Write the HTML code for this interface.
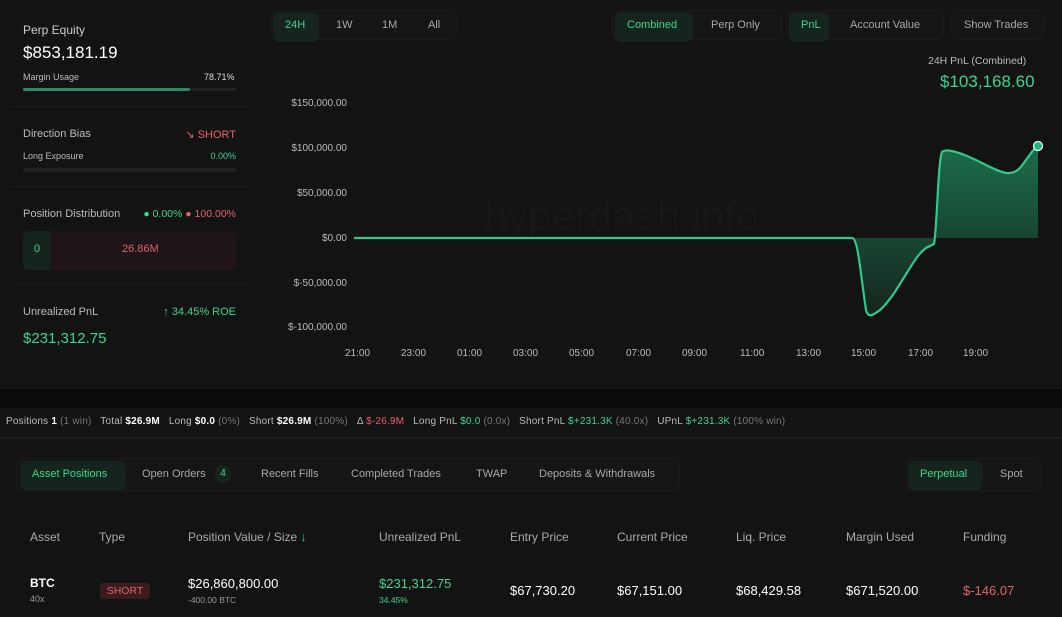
<!DOCTYPE html>
<html><head><meta charset="utf-8"><style>
*{box-sizing:border-box;margin:0;padding:0}
body{width:1062px;height:617px;background:#0c0c0c;font-family:"Liberation Sans",sans-serif;color:#e8e8e8;position:relative;overflow:hidden;font-size:11px}
.a{position:absolute;white-space:nowrap}
.g{color:#3dd68c}.r{color:#e5616b}.m{color:#a8a8a8}.d{color:#777}
.panel{background:#131313}
.seg{position:absolute;background:#151515;border:1px solid #1c1c1c;border-radius:8px;height:30px}
.on{position:absolute;background:#16241e;border-radius:7px;color:#3dd68c}
.ax{font-size:10px;color:#bbb}
</style></head><body>
<div class="a panel" style="left:0;top:0;width:1062px;height:389px"></div>
<div class="a panel" style="left:0;top:408px;width:1062px;height:209px"></div>
<div class="a" style="left:0;top:437px;width:1062px;height:1px;background:#222"></div>

<!-- left panel -->
<div class="a" style="left:23px;top:23px;font-size:12px;color:#ccc">Perp Equity</div>
<div class="a" style="left:23px;top:43px;font-size:17px;color:#fff">$853,181.19</div>
<div class="a" style="left:23px;top:72px;font-size:9px;color:#bbb">Margin Usage</div>
<div class="a" style="left:204px;top:72px;font-size:9px;color:#ddd">78.71%</div>
<div class="a" style="left:23px;top:88px;width:213px;height:3px;background:#222;border-radius:2px"><div style="width:167px;height:3px;background:#2f8a63;border-radius:2px"></div></div>
<div class="a" style="left:10px;top:106px;width:238px;height:1px;background:#1e1e1e"></div>
<div class="a" style="left:23px;top:128px;font-size:11px;color:#bbb">Direction Bias</div>
<div class="a r" style="right:826px;top:128px;font-size:11px">↘ SHORT</div>
<div class="a" style="left:23px;top:151px;font-size:9px;color:#bbb">Long Exposure</div>
<div class="a g" style="right:826px;top:151px;font-size:9px">0.00%</div>
<div class="a" style="left:23px;top:168px;width:213px;height:4px;background:#222;border-radius:2px"></div>
<div class="a" style="left:10px;top:186px;width:238px;height:1px;background:#1e1e1e"></div>
<div class="a" style="left:23px;top:208px;font-size:11px;color:#bbb">Position Distribution</div>
<div class="a" style="right:826px;top:208px;font-size:10.5px"><span class="g">● 0.00%</span> <span class="r">● 100.00%</span></div>
<div class="a" style="left:23px;top:231px;width:213px;height:39px;background:#201516;border-radius:6px;overflow:hidden"><div style="width:27px;height:39px;background:#15241d"></div></div>
<div class="a g" style="left:34px;top:243px;font-size:11px">0</div>
<div class="a" style="left:122px;top:243px;font-size:11px;color:#d9636c">26.86M</div>
<div class="a" style="left:14px;top:284px;width:234px;height:1px;background:#1e1e1e"></div>
<div class="a" style="left:23px;top:306px;font-size:11px;color:#bbb">Unrealized PnL</div>
<div class="a g" style="right:826px;top:306px;font-size:11px">↑ 34.45% ROE</div>
<div class="a g" style="left:23px;top:330px;font-size:15px">$231,312.75</div>

<!-- chart controls -->
<div class="seg" style="left:270px;top:10px;width:188px"></div>
<div class="on" style="left:273px;top:12px;width:46px;height:30px"></div>
<div class="a g" style="left:285px;top:19px;font-size:11px">24H</div>
<div class="a m" style="left:336px;top:19px;font-size:11px">1W</div>
<div class="a m" style="left:382px;top:19px;font-size:11px">1M</div>
<div class="a m" style="left:428px;top:19px;font-size:11px">All</div>
<div class="seg" style="left:612px;top:10px;width:170px"></div>
<div class="on" style="left:615px;top:12px;width:78px;height:30px"></div>
<div class="a g" style="left:627px;top:19px;font-size:11px">Combined</div>
<div class="a m" style="left:711px;top:19px;font-size:11px">Perp Only</div>
<div class="seg" style="left:786px;top:10px;width:158px"></div>
<div class="on" style="left:789px;top:12px;width:40px;height:30px"></div>
<div class="a g" style="left:801px;top:19px;font-size:11px">PnL</div>
<div class="a m" style="left:850px;top:19px;font-size:11px">Account Value</div>
<div class="seg" style="left:950px;top:10px;width:95px"></div>
<div class="a m" style="left:964px;top:19px;font-size:11px">Show Trades</div>
<div class="a" style="left:928px;top:55px;font-size:10.5px;color:#bbb">24H PnL (Combined)</div>
<div class="a g" style="left:940px;top:72px;font-size:17px">$103,168.60</div>

<!-- axes -->
<div class="a ax" style="right:715px;top:98px">$150,000.00</div>
<div class="a ax" style="right:715px;top:143px">$100,000.00</div>
<div class="a ax" style="right:715px;top:188px">$50,000.00</div>
<div class="a ax" style="right:715px;top:233px">$0.00</div>
<div class="a ax" style="right:715px;top:278px">$-50,000.00</div>
<div class="a ax" style="right:715px;top:322px">$-100,000.00</div>
<div class="a ax" style="left:345px;top:348px">21:00</div>
<div class="a ax" style="left:401px;top:348px">23:00</div>
<div class="a ax" style="left:457px;top:348px">01:00</div>
<div class="a ax" style="left:513px;top:348px">03:00</div>
<div class="a ax" style="left:569px;top:348px">05:00</div>
<div class="a ax" style="left:626px;top:348px">07:00</div>
<div class="a ax" style="left:682px;top:348px">09:00</div>
<div class="a ax" style="left:740px;top:348px">11:00</div>
<div class="a ax" style="left:796px;top:348px">13:00</div>
<div class="a ax" style="left:851px;top:348px">15:00</div>
<div class="a ax" style="left:908px;top:348px">17:00</div>
<div class="a ax" style="left:963px;top:348px">19:00</div>
<div class="a" style="left:484px;top:192px;font-size:42px;color:#171717">hyperdash.info</div>
<svg class="a" style="left:0;top:0" width="1062" height="400">
<defs><linearGradient id="f" x1="0" y1="0" x2="0" y2="1"><stop offset="0" stop-color="#1f8a5e" stop-opacity=".75"/><stop offset="1" stop-color="#1f8a5e" stop-opacity=".15"/></linearGradient></defs>
<path d="M852 238 C858 238 860 270 866 310 C868 318 872 316 880 310 C900 292 915 250 930 246 L934 244 C937 230 938 160 942 152 C946 148 960 152 980 162 C1000 172 1010 178 1020 168 C1028 158 1032 150 1038 146 L1038 238 Z" fill="url(#f)"/>
<path d="M354 238 L852 238 C858 238 860 270 866 310 C868 318 872 316 880 310 C900 292 915 250 930 246 L934 244 C937 230 938 160 942 152 C946 148 960 152 980 162 C1000 172 1010 178 1020 168 C1028 158 1032 150 1038 146" fill="none" stroke="#30c98a" stroke-width="2.2"/>
<circle cx="1038" cy="146" r="4.5" fill="#22b37a" stroke="#e8fff4" stroke-width="1.3"/>
</svg>

<!-- stats bar -->
<div class="a" style="left:6px;top:416px;font-size:10px;color:#bbb;letter-spacing:0.2px">Positions <b style="color:#fff">1</b> <span class="d">(1 win)</span> &nbsp; Total <b style="color:#fff">$26.9M</b> &nbsp; Long <b style="color:#fff">$0.0</b> <span class="d">(0%)</span> &nbsp; Short <b style="color:#fff">$26.9M</b> <span class="d">(100%)</span> &nbsp; Δ <span class="r">$-26.9M</span> &nbsp; Long PnL <span class="g">$0.0</span> <span class="d">(0.0x)</span> &nbsp; Short PnL <span class="g">$+231.3K</span> <span class="d">(40.0x)</span> &nbsp; UPnL <span class="g">$+231.3K</span> <span class="d">(100% win)</span></div>

<!-- tabs -->
<div class="seg" style="left:16px;top:458px;width:664px;height:33px"></div>
<div class="on" style="left:20px;top:461px;width:106px;height:29px"></div>
<div class="a g" style="left:32px;top:468px;font-size:11px">Asset Positions</div>
<div class="a m" style="left:142px;top:468px;font-size:11px">Open Orders</div>
<div class="a g" style="left:215px;top:465px;width:16px;height:18px;background:#16241e;border-radius:8px;font-size:10px;text-align:center;line-height:18px">4</div>
<div class="a m" style="left:261px;top:468px;font-size:11px">Recent Fills</div>
<div class="a m" style="left:351px;top:468px;font-size:11px">Completed Trades</div>
<div class="a m" style="left:476px;top:468px;font-size:11px">TWAP</div>
<div class="a m" style="left:539px;top:468px;font-size:11px">Deposits &amp; Withdrawals</div>
<div class="seg" style="left:905px;top:458px;width:137px;height:33px"></div>
<div class="on" style="left:908px;top:461px;width:75px;height:29px"></div>
<div class="a g" style="left:920px;top:468px;font-size:11px">Perpetual</div>
<div class="a m" style="left:1000px;top:468px;font-size:11px">Spot</div>

<!-- table -->
<div class="a" style="left:0;top:530px;font-size:12px;color:#aaa;width:1062px">
<span class="a" style="left:30px">Asset</span><span class="a" style="left:99px">Type</span><span class="a" style="left:188px">Position Value / Size <span class="g">↓</span></span><span class="a" style="left:379px">Unrealized PnL</span><span class="a" style="left:510px">Entry Price</span><span class="a" style="left:617px">Current Price</span><span class="a" style="left:736px">Liq. Price</span><span class="a" style="left:846px">Margin Used</span><span class="a" style="left:963px">Funding</span></div>
<div class="a" style="left:30px;top:576px;font-size:12px;color:#fff;font-weight:bold">BTC</div>
<div class="a" style="left:30px;top:594px;font-size:9px;color:#999">40x</div>
<div class="a" style="left:100px;top:583px;width:50px;height:16px;background:#3a1c1f;border-radius:3px;color:#e5616b;font-size:10.5px;text-align:center;line-height:16px">SHORT</div>
<div class="a" style="left:188px;top:576px;font-size:13px;color:#fff">$26,860,800.00</div>
<div class="a" style="left:188px;top:595px;font-size:8.5px;color:#999">-400.00 BTC</div>
<div class="a g" style="left:379px;top:576px;font-size:13px">$231,312.75</div>
<div class="a g" style="left:379px;top:595px;font-size:8.5px">34.45%</div>
<div class="a" style="left:510px;top:583px;font-size:13px;color:#fff">$67,730.20</div>
<div class="a" style="left:617px;top:583px;font-size:13px;color:#fff">$67,151.00</div>
<div class="a" style="left:736px;top:583px;font-size:13px;color:#fff">$68,429.58</div>
<div class="a" style="left:846px;top:583px;font-size:13px;color:#fff">$671,520.00</div>
<div class="a r" style="left:963px;top:583px;font-size:13px">$-146.07</div>
</body></html>
